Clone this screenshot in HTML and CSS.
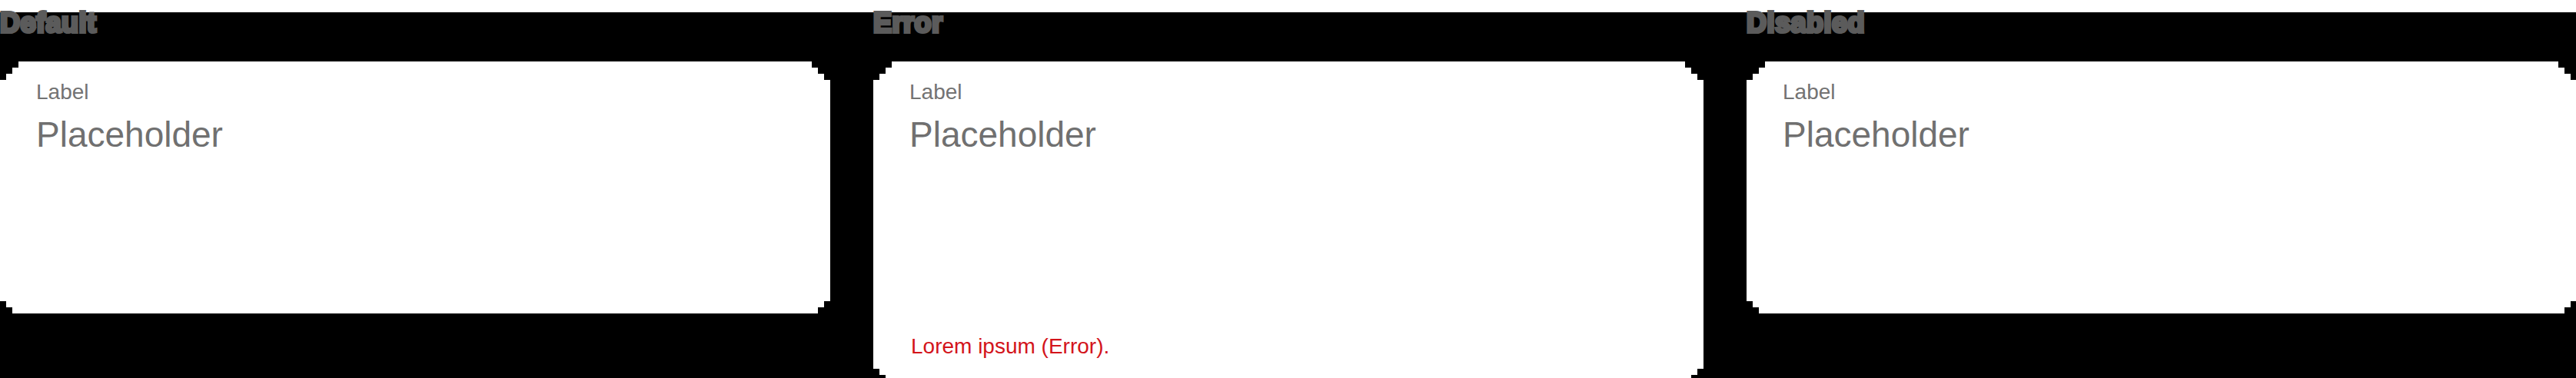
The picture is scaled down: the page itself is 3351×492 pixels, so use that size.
FILE: index.html
```html
<!DOCTYPE html>
<html lang="en">
<head>
<meta charset="utf-8">
<title>Text area states</title>
<link rel="stylesheet" href="styles.css">
</head>
<body>
  <main class="states">
    <section class="state">
      <h2 class="state-title">Default</h2>
      <div class="field">
        <span class="field-label">Label</span>
        <span class="field-placeholder">Placeholder</span>
      </div>
    </section>
    <section class="state">
      <h2 class="state-title">Error</h2>
      <div class="field field-error">
        <span class="field-label">Label</span>
        <span class="field-placeholder">Placeholder</span>
        <span class="field-message">Lorem ipsum (Error).</span>
      </div>
    </section>
    <section class="state">
      <h2 class="state-title">Disabled</h2>
      <div class="field">
        <span class="field-label">Label</span>
        <span class="field-placeholder">Placeholder</span>
      </div>
    </section>
  </main>
</body>
</html>
```

FILE: styles.css
```css
html, body {
  margin: 0;
  padding: 0;
}

body {
  width: 3352px;
  height: 492px;
  overflow: hidden;
  background: linear-gradient(#ffffff 0 16px, #000000 16px);
  font-family: "Liberation Sans", Arial, Helvetica, sans-serif;
}

.states {
  display: grid;
  grid-template-columns: repeat(3, 1080px);
  column-gap: 56px;
  align-items: start;
}

.state {
  display: flex;
  flex-direction: column;
  padding-top: 10px;
}

.state-title {
  margin: 0 0 30px 0;
  height: 40px;
  font-size: 36px;
  line-height: 40px;
  font-weight: 700;
  color: #5b5b5b;
  -webkit-text-stroke: 4px #5b5b5b;
  paint-order: stroke fill;
  letter-spacing: 0.5px;
}

.field {
  box-sizing: border-box;
  height: 328px;
  background: #ffffff;
  padding: 24px 48px 0 47px;
  display: flex;
  flex-direction: column;
  clip-path: polygon(
    24px 0, calc(100% - 24px) 0,
    calc(100% - 24px) 8px, calc(100% - 16px) 8px,
    calc(100% - 16px) 16px, calc(100% - 8px) 16px,
    calc(100% - 8px) 24px, 100% 24px,
    100% calc(100% - 16px), calc(100% - 8px) calc(100% - 16px),
    calc(100% - 8px) calc(100% - 8px), calc(100% - 16px) calc(100% - 8px),
    calc(100% - 16px) 100%, 16px 100%,
    16px calc(100% - 8px), 8px calc(100% - 8px),
    8px calc(100% - 16px), 0 calc(100% - 16px),
    0 24px, 8px 24px,
    8px 16px, 16px 16px,
    16px 8px, 24px 8px
  );
}

.field-error {
  height: 416px;
  padding-bottom: 29px;
}

.field-label {
  font-size: 28px;
  line-height: 32px;
  color: #737373;
}

.field-placeholder {
  margin-top: 13px;
  font-size: 46px;
  line-height: 53px;
  color: #707070;
}

.field-message {
  margin-top: auto;
  padding-left: 2px;
  font-size: 28px;
  line-height: 32px;
  color: #d3141b;
}
```
